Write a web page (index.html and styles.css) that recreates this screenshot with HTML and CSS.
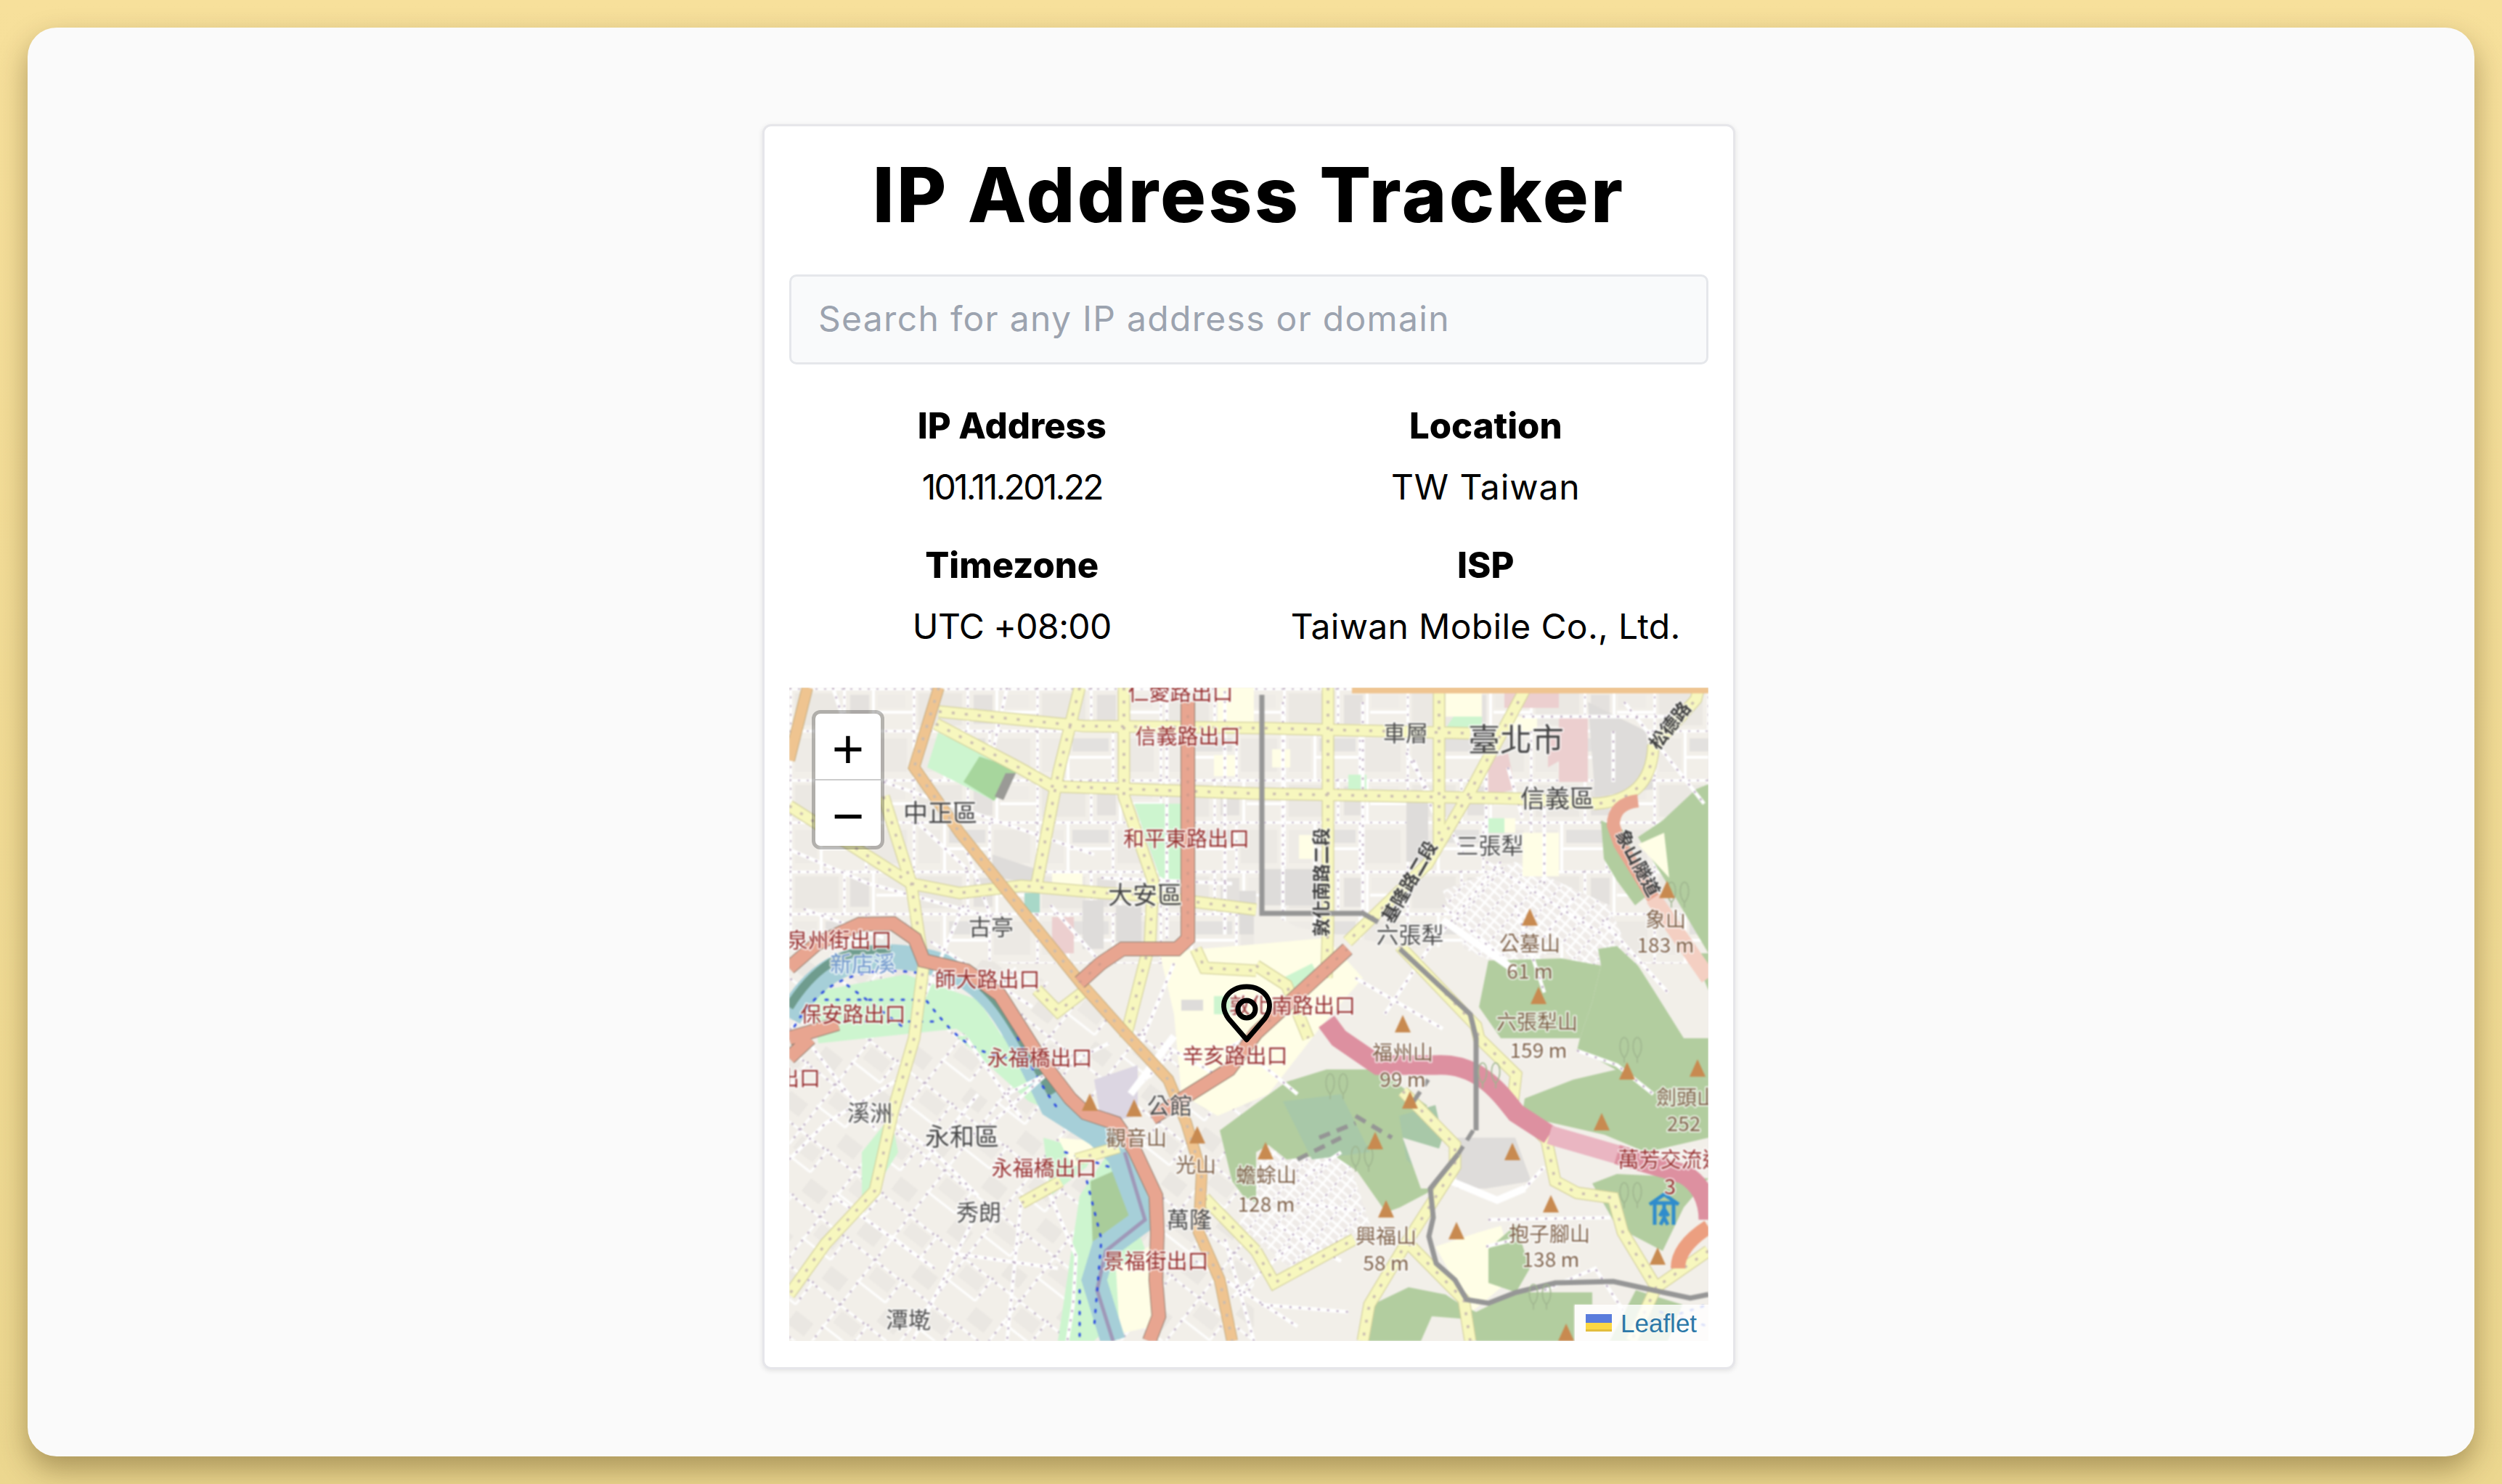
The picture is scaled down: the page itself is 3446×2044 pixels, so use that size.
FILE: index.html
```html
<!DOCTYPE html>
<html lang="en">
<head>
<meta charset="utf-8">
<title>IP Address Tracker</title>
<link rel="stylesheet" href="styles.css">
</head>
<body>
<main class="panel">
<section class="card">
<h1 class="title">IP Address Tracker</h1>
<input class="search" type="text" placeholder="Search for any IP address or domain">
<dl class="facts">
<div class="fact"><dt>IP Address</dt><dd class="ip">101.11.201.22</dd></div>
<div class="fact"><dt>Location</dt><dd class="loose">TW Taiwan</dd></div>
<div class="fact"><dt>Timezone</dt><dd class="utc">UTC +08:00</dd></div>
<div class="fact"><dt>ISP</dt><dd>Taiwan Mobile Co., Ltd.</dd></div>
</dl>
<div class="map">
<svg class="tiles" viewBox="0 0 1266 900" width="1266" height="900" xmlns="http://www.w3.org/2000/svg">
<defs>
<pattern id="city" width="170" height="126" patternUnits="userSpaceOnUse">
<rect width="170" height="126" fill="#f2efe9"/>
<rect x="8" y="8" width="60" height="44" fill="#ebe8e3"/>
<rect x="84" y="10" width="26" height="40" fill="#e4e1de"/>
<rect x="122" y="10" width="38" height="18" fill="#efece7"/>
<rect x="8" y="70" width="30" height="46" fill="#eeebe6"/>
<rect x="50" y="70" width="50" height="18" fill="#e3e1df"/>
<rect x="112" y="70" width="50" height="46" fill="#ece9e4"/>
<path d="M0 2H170M0 60H170M2 0V126M76 0V60M44 60V126M106 60V126M116 0V60M120 34H170M44 96H106" stroke="#fff" stroke-width="4" fill="none"/>
<path d="M0 2H170M0 60H170M76 0V60M106 60V126M2 0V126" stroke="#c4b6c8" stroke-width="2" stroke-dasharray="3 9" fill="none"/>
</pattern>
<pattern id="suburb" width="96" height="78" patternUnits="userSpaceOnUse" patternTransform="rotate(38)">
<rect width="96" height="78" fill="#f2efe9"/>
<rect x="10" y="8" width="34" height="20" fill="#ece9e4"/>
<rect x="56" y="46" width="30" height="22" fill="#eae7e2"/>
<path d="M0 3H96M3 0V78M50 0V40M0 40H50" stroke="#fff" stroke-width="3" fill="none"/>
<path d="M0 3H96M3 0V78M50 0V40" stroke="#b9a8bf" stroke-width="2.5" stroke-dasharray="3 11" fill="none"/>
</pattern>
<pattern id="dense" width="26" height="20" patternUnits="userSpaceOnUse" patternTransform="rotate(40)">
<rect width="26" height="20" fill="#efebe8"/>
<path d="M0 2H26M2 0V20M14 0V20M0 11H26" stroke="#fff" stroke-width="3" fill="none"/>
<path d="M2 0V20" stroke="#c4b6c8" stroke-width="2" stroke-dasharray="2 7" fill="none"/>
</pattern>
<g id="minor">
<path d="M130 130L420 230M0 223L109 270L278 316M240 300L180 440M278 316L235 200M430 262L610 270"/>
<path d="M60 0L100 120M300 0L280 90M245 250L170 180M20 305L130 345M195 350L335 440M360 300L430 380"/>
<path d="M530 380L480 500M520 5V345M600 5V340M680 20V320M790 20V340M850 90L930 230M960 60V220M960 240L1120 340M1040 150V270M1120 320L1210 420"/>
<path d="M980 240L880 360L820 450M900 300L990 380M1000 300L1040 420M1080 290L1020 370M1135 60V130M1010 40H1210M1150 20L1260 160"/>
<path d="M780 400L900 470M990 110L1010 180M860 100L890 180"/>
<path d="M244 483L320 593M256 620L380 510M0 650L50 600L150 540M100 570L200 640L260 700M358 696L395 783L391 850L383 900"/>
<path d="M20 480L120 610M60 700L200 800M180 660L260 560M260 720L170 900M300 560L440 490M230 780L370 800M320 700L300 900"/>
<path d="M512 490L600 540M600 500L700 440M640 510L700 560M470 560L530 500M600 760L640 900M560 790L700 880"/>
<path d="M912 680L975 706L1013 690L1040 660M963 733L1131 730M960 770L1000 760M1085 500L1140 520L1190 560M1040 830L1110 800L1150 860"/>
<path d="M700 680L760 640M700 710L780 720M670 740L760 790M690 770L610 840M650 850L770 860"/>
</g>
<g id="yl">
<path d="M206 33L404 53L660 56L938 63"/>
<path d="M202 50L316 110L362 136L643 146L1005 153L1110 160Q1186 155 1190 83L1249 16L1253 0"/>
<path d="M400 0L371 116L341 270"/>
<path d="M461 0V150L501 266L497 350L463 483"/>
<path d="M0 163L168 270L185 383L172 483L143 583L118 693L50 766L0 836"/>
<path d="M130 150L168 270L235 283L320 273L433 283L488 286L643 306"/>
<path d="M742 0V330L740 400"/>
<path d="M895 0V216"/>
<path d="M1013 3L938 143L879 243L769 350"/>
<path d="M643 383L685 410L715 483"/>
<path d="M560 360L572 386L643 390"/>
<path d="M341 416L370 446L404 420"/>
<path d="M841 356L946 466L950 483L1001 533L996 576L1043 623L1055 680L1085 696L1135 703L1148 750L1194 826"/>
<path d="M1266 776L1194 826M1194 826L1160 900"/>
<path d="M845 556L917 630L917 660L853 760L799 850L790 900M853 766L929 843L938 900M643 776L668 820L778 760"/>
<path d="M572 703L643 776M320 710L374 680M395 650L454 633"/>
</g>
<g id="tree"><path d="M0 0C-9 -10 -6 -28 0 -28C6 -28 9 -10 0 0V7M18 0C9 -10 12 -28 18 -28C24 -28 27 -10 18 0V7" fill="none" stroke="#9fb58f" stroke-width="1.6"/></g>
</defs>

<rect class="land" width="1266" height="900"/>
<rect fill="url(#city)" width="1266" height="380"/>
<polygon class="grey" points="404,293 433,293 433,360 404,360"/>
<polygon class="grey" points="450,300 485,300 485,350 450,350"/>
<polygon class="grey" points="620,280 643,280 643,340 620,340"/>
<polygon class="grey" points="280,230 340,250 335,270 280,260"/>
<polygon class="grey" points="650,250 730,250 730,300 650,300"/>
<polygon class="grey" points="850,150 880,150 880,240 850,240"/>
<polygon class="resid" points="904,6 954,6 954,40 904,40"/>
<polygon class="park" points="915,40 954,40 954,56 904,56"/>
<polygon class="pinkblock" points="985,8 1060,8 1060,28 985,28"/>
<polygon class="resid" points="1118,90 1165,90 1165,120 1118,120"/>
<polygon class="park" points="963,180 985,180 985,200 963,200"/>
<polygon class="resid" points="985,180 1000,180 1000,200 985,200"/>
<polygon class="resid" points="585,93 614,93 614,122 585,122"/>
<polygon class="resid" points="362,256 404,256 404,273 362,273"/>
<polygon class="teal" points="324,283 345,283 345,310 324,310"/>
<polygon class="pinkblock" points="362,316 392,316 392,366 362,366"/>
<polygon class="resid" points="702,203 723,203 723,236 702,236"/>
<polygon class="resid" points="665,85 690,85 690,110 665,110"/>
<polygon class="park" points="770,120 795,120 795,145 770,145"/>
<polygon fill="url(#suburb)" points="0,340 300,380 500,470 640,560 640,900 0,900"/>
<polygon fill="#f2efe9" points="640,300 700,330 860,360 990,350 1060,420 1266,470 1266,900 640,900"/>
<polygon fill="url(#dense)" points="900,280 1000,240 1060,340 1020,400 930,360"/>
<polygon fill="url(#dense)" points="1000,240 1130,300 1170,400 1090,400 1040,310"/>
<polygon fill="url(#dense)" points="650,640 760,620 800,740 690,800 620,740"/>

<polygon class="resid" points="510,365 740,345 790,400 730,470 660,560 590,590 540,560 530,450"/>
<polygon class="park" points="585,425 610,425 610,450 585,450"/>
<polygon class="grey" points="540,430 570,430 570,445 540,445"/>
<polygon class="park" points="680,400 720,380 730,400 700,430"/>
<polygon class="resid" points="590,0 640,0 640,60 590,60"/>
<polygon class="resid" points="985,40 1030,40 1030,60 985,60"/>
<polygon class="resid" points="1010,200 1060,200 1060,260 1010,260"/>
<polygon class="resid" points="890,770 980,740 1000,810 940,860"/>
<polygon class="grey" points="1100,20 1180,60 1190,140 1110,150"/>
<polygon class="pinkblock" points="1045,60 1080,60 1080,90 1045,110"/>
<polygon class="pinkblock" points="960,100 990,90 1000,140 960,150"/>
<polygon class="pinkblock" points="1060,40 1100,40 1100,130 1060,130"/>

<g class="forest">
<polygon points="1249,140 1203,183 1169,206 1211,273 1266,366 1266,133"/>
<polygon points="1118,183 1148,196 1186,283 1165,300 1140,266 1122,236"/>
<polygon points="1114,360 1140,356 1169,383 1190,416 1232,483 1266,483 1266,540 1190,535 1145,530 1100,505 1085,500 1089,483 1106,433 1118,383"/>
<polygon points="963,376 1064,373 1118,383 1106,433 1089,483 980,483 950,440"/>
<polygon points="1245,366 1266,366 1266,417"/>
<polygon points="1140,526 1266,540 1266,620 1180,640 1123,616 1009,590 1013,566 1080,540"/>
<polygon points="740,526 811,526 879,576 845,623 912,640 879,696 841,716 822,723 782,666 748,643 685,650 660,630 643,640 593,610 643,573 685,543"/>
<polygon points="593,610 643,590 643,710 625,700 610,680"/>
<polygon points="1140,670 1266,676 1232,716 1203,776 1140,743 1106,683"/>
<polygon points="803,850 853,826 904,836 925,850 946,860 1001,833 1106,833 1106,850 1081,850 1081,900 946,900 935,870 885,866 870,900 790,900"/>
<polygon points="963,773 1001,740 1020,800 1001,833 963,820"/>
<polygon points="1166,830 1230,850 1210,900 1130,900"/>
</g>
<polygon class="resid" points="1169,216 1205,200 1212,262"/>
<polygon class="forest2" points="680,570 760,560 800,640 720,650"/>
<polygon class="forest2" points="840,590 890,575 900,620 880,680 850,650"/>
<polygon class="grey" points="917,620 1000,620 1022,680 960,690 920,700"/>
<polygon class="grey" points="900,710 950,700 975,730 930,750"/>
<polygon class="pale" points="845,620 912,640 910,690 870,690"/>
<polygon class="pale" points="895,690 960,690 985,740 950,750 895,750"/>
<polygon class="park" points="205,62 316,113 282,156 190,110"/>
<polygon class="parkdark" points="262,95 316,113 282,156 240,130"/>
<polygon class="greydark" points="298,118 312,118 295,155 283,150"/>
<polygon class="park" points="475,160 550,160 550,280 510,260"/>
<polygon class="park" points="350,620 420,640 410,660 360,700"/>
<polygon class="resid" points="370,620 425,625 430,650 390,660"/>
<polygon class="park" points="100,640 140,590 150,640 100,720"/>
<polygon class="park" points="400,700 440,640 500,800 460,860 420,900 370,900"/>
<polygon class="forest-lo" points="415,680 460,660 480,760 440,780 420,830"/>
<polygon class="resid" points="450,800 510,760 500,880 455,890"/>
<polygon class="park" points="30,420 160,395 260,430 300,490 320,530 230,470 40,490"/>
<polygon class="park" points="230,480 300,480 360,540 400,600 330,570"/>
<polygon class="lilac" points="420,540 480,520 480,590 430,600"/>

<path class="river" d="M0 455C40 380 100 360 180 375C280 395 300 450 362 576L425 616L454 643L488 733L433 773L420 816L446 900"/>
<path class="riverdark" d="M235 390C290 420 310 470 362 560"/>
<path class="riverdark" d="M0 440C40 375 90 355 140 362"/>
<path class="rivermauve" d="M462 640L490 733L436 776L424 830L446 900"/>
<path class="dots-blue" d="M0 480C40 400 100 380 190 395M300 440C310 480 340 540 370 580M410 680L430 760L420 880M60 460H200M180 420C220 470 240 500 300 510M50 430H180M80 410L160 470M1170 880L1266 850M1200 860L1266 880M400 830L400 900M380 640L440 660"/>

<use href="#minor" class="r-white"/>
<use href="#minor" class="r-dots"/>

<path class="r-whitewide" d="M912 680L975 706L1013 690M900 320L1000 390M470 560L530 480"/>

<use href="#yl" class="r-ycase"/>
<use href="#yl" class="r-yellow"/>
<use href="#yl" class="r-dotsy"/>

<path class="r-tancase" d="M206 0L172 110L235 200L328 316L404 410L463 476L522 540L547 600L568 670L564 750L593 816L610 900M25 0L0 100"/>
<path class="r-tan" d="M206 0L172 110L235 200L328 316L404 410L463 476L522 540L547 600L568 670L564 750L593 816L610 900M25 0L0 100"/>
<path class="r-dotsy" d="M206 0L172 110L235 200L328 316L404 410L463 476L522 540L547 600L568 670L564 750L593 816L610 900"/>
<path class="r-tantop" d="M1266 3H775" />

<path class="r-redcase" d="M549 20V346L534 360H459L429 380L400 406M769 360L643 476L606 526L547 563L500 593M0 386L38 353L97 326L143 325L173 346L185 376L244 390L290 423L349 516L387 566L408 586L450 600L475 636L505 700L507 750L505 816L509 866L496 900M0 510L29 483M0 483L67 463"/>
<path class="r-red" d="M549 20V346L534 360H459L429 380L400 406M769 360L643 476L606 526L547 563L500 593M0 386L38 353L97 326L143 325L173 346L185 376L244 390L290 423L349 516L387 566L408 586L450 600L475 636L505 700L507 750L505 816L509 866L496 900M0 510L29 483M0 483L67 463"/>
<path class="r-dotsr" d="M549 20V346M429 380L400 406M769 360L643 476"/>
<path class="r-red" d="M1169 156Q1135 160 1135 190L1144 215L1190 290"/>
<path class="r-redlight" d="M1190 290L1266 400"/>
<path class="r-pink" d="M740 460L757 483L811 520H890C950 516 980 560 1001 586L1047 616"/>
<path class="r-pinklight" d="M1047 616L1140 643"/>
<path class="r-pink" d="M1140 643L1232 670Q1266 690 1266 733"/>
<path class="r-orange" d="M1266 743Q1224 770 1224 800"/>

<path class="r-gray" d="M651 10V311H790L811 323M841 360L938 450L946 483V610M921 643L883 690L887 730L881 756L891 793L917 816L933 843L963 848L1001 833L1055 820L1135 818L1190 830L1241 841L1266 836"/>
<path class="r-graydash" d="M942 610L921 643M780 590L830 620M730 620L780 600M700 650L760 620M860 570L880 540"/>

<g>
<use href="#tree" x="745" y="560"/><use href="#tree" x="955" y="545"/><use href="#tree" x="1150" y="510"/>
<use href="#tree" x="1150" y="710"/><use href="#tree" x="1215" y="296"/><use href="#tree" x="780" y="660"/><use href="#tree" x="1025" y="850"/>
</g>

<g class="peaks">
<path d="M1020 304l-11 24h22zM1032 412l-11 24h22zM1209 266l-11 24h22zM845 451l-11 24h22zM855 556l-11 24h22zM807 612l-11 24h22zM656 626l-11 24h22zM822 706l-11 24h22zM919 736l-11 24h22zM996 627l-11 24h22zM1049 699l-11 24h22zM1119 586l-11 24h22zM1154 516l-11 24h22zM1251 512l-11 24h22zM1196 771l-11 24h22zM1070 876l-11 24h22zM414 559l-11 24h22zM475 567l-11 24h22zM562 604l-11 24h22z"/>
</g>

<g class="shelter">
<path d="M1185 712L1205 698L1225 712M1192 712V740M1218 712V740M1188 710H1222" fill="none"/>
<path d="M1205 712v6M1205 718l-6 10M1205 718l6 10M1205 722v8M1205 730l-5 10M1205 730l5 10" fill="none" stroke-width="3"/>
</g>
<g class="lb-blue"><text x="101" y="391">新店溪</text></g>

<g class="lb-road">
<text transform="translate(1220 58) rotate(-52)">松德路</text>
<text transform="translate(1161 246) rotate(62)">象山隧道</text>
<text transform="translate(862 272) rotate(-60)">基隆路二段</text>
<text transform="translate(742 268) rotate(-90)">敦化南路二段</text>
</g>

<g class="lb-area">
<text x="208" y="185">中正區</text>
<text x="490" y="298">大安區</text>
<text x="1058" y="165">信義區</text>
<text class="lb-city" x="1001" y="88">臺北市</text>
<text x="238" y="631">永和區</text>
</g>
<g class="lb-sub">
<text x="278" y="341">古亭</text>
<text x="849" y="74">車層</text>
<text x="965" y="229">三張犁</text>
<text x="855" y="352">六張犁</text>
<text x="111" y="597">溪洲</text>
<text x="261" y="734">秀朗</text>
<text x="164" y="882">潭墘</text>
<text x="524" y="587">公館</text>
<text x="551" y="744">萬隆</text>
</g>
<g class="lb-peak">
<text x="1020" y="363">公墓山</text><text x="1020" y="401">61 m</text>
<text x="1207" y="330">象山</text><text x="1207" y="365">183 m</text>
<text x="1030" y="471">六張犁山</text><text x="1032" y="510">159 m</text>
<text x="845" y="513">福州山</text><text x="845" y="550">99 m</text>
<text x="1236" y="575">劍頭山</text><text x="1232" y="611">252</text>
<text x="657" y="682">蟾蜍山</text><text x="657" y="722">128 m</text>
<text x="822" y="766">興福山</text><text x="822" y="803">58 m</text>
<text x="1047" y="763">抱子腳山</text><text x="1049" y="798">138 m</text>
<text x="560" y="668">光山</text>
<text x="478" y="631">觀音山</text>
</g>
<g class="lb-exit">
<text x="539" y="18">仁愛路出口</text>
<text x="549" y="78">信義路出口</text>
<text x="547" y="219">和平東路出口</text>
<text x="69" y="359">泉州街出口</text>
<text x="273" y="413">師大路出口</text>
<text x="88" y="461">保安路出口</text>
<text x="345" y="521">永福橋出口</text>
<text x="351" y="673">永福橋出口</text>
<text x="14" y="549">出口</text>
<text x="614" y="518">辛亥路出口</text>
<text x="693" y="449">敦化南路出口</text>
<text x="505" y="801">景福街出口</text>
<text x="1214" y="661">萬芳交流道</text>
<text x="1213" y="698">3</text>
</g>
</svg>

<svg class="pin" viewBox="0 0 80 90" width="80" height="90" xmlns="http://www.w3.org/2000/svg">
<path d="M40 81L15 52C-1 30 15 8 40 8C65 8 81 30 65 52Z" fill="none" stroke="#000" stroke-width="7" stroke-linejoin="round"/>
<circle cx="40" cy="39" r="12" fill="none" stroke="#000" stroke-width="7"/>
</svg>

<div class="zoom">
<a class="zoom-btn zoom-in">+</a>
<a class="zoom-btn">&#8722;</a>
</div>
<div class="credit">
<svg class="flag" viewBox="0 0 36 24" width="36" height="24" xmlns="http://www.w3.org/2000/svg"><rect width="36" height="12" fill="#5a7cdc"/><rect y="12" width="36" height="9" fill="#fbd743"/><rect y="21" width="36" height="3" fill="#e3bd3c"/></svg>
<span>Leaflet</span>
</div>
</div>
</section>
</main>
</body>
</html>
```
FILE: styles.css
```css
* { box-sizing: border-box; }
html, body { margin: 0; height: 100%; }
body {
  padding: 38px 38px 38px;
  overflow: hidden;
  background: linear-gradient(180deg, #f7e09b 0%, #ecd78f 100%);
  font-family: Inter, "Liberation Sans", sans-serif;
  color: #000;
}
.panel {
  height: 100%;
  display: flex;
  justify-content: center;
  align-items: flex-start;
  padding: 133px 6px 0 0;
  border-radius: 40px;
  background: #fafafa;
  box-shadow: 0 18px 40px rgba(60, 40, 0, .38);
}
.card {
  width: 1340px;
  padding: 29px 34px 36px;
  background: #fff;
  border: 3px solid #e6e6ea;
  border-radius: 12px;
  box-shadow: 0 2px 7px rgba(0, 0, 0, .1);
}
.title {
  margin: 0 0 45px;
  font-size: 105px;
  line-height: 130px;
  font-weight: 800;
  text-align: center;
  letter-spacing: 3.2px;
}
.search {
  display: block;
  width: 100%;
  height: 124px;
  padding: 0 37px 3px;
  font: 400 48px Inter, "Liberation Sans", sans-serif;
  letter-spacing: 1.3px;
  background: #f9fafb;
  border: 3px solid #e5e7eb;
  border-radius: 10px;
  outline: none;
}
.search::placeholder { color: #9ca3af; opacity: 1; }
.facts {
  display: grid;
  grid-template-columns: 1fr 1fr;
  gap: 24px 39px;
  margin: 43px 0 42px;
}
.fact { text-align: center; }
.fact dt { font-size: 49px; line-height: 84px; font-weight: 800; }
.fact dd { margin: 0; font-size: 48px; line-height: 84px; font-weight: 400; letter-spacing: .3px; }
.fact .ip { letter-spacing: -2.7px; }
.fact .loose { letter-spacing: .9px; }
.fact .utc { letter-spacing: -.6px; }
.map {
  position: relative;
  height: 900px;
  overflow: hidden;
  background: #f2efe9;
}
.tiles { display: block; filter: blur(1.2px); }
.land { fill: #f2efe9; }
.resid { fill: #fffee6; }
.grey { fill: #dedcda; }
.greydark { fill: #9a9a96; }
.teal { fill: #a8d8c8; }
.pale { fill: #f2efe9; }
.pinkblock { fill: #eccfcf; }
.forest polygon { fill: #b2cd9f; }
.forest-lo { fill: #a9cc9a; }
.forest2 { fill: #a8c8a8; }
.park { fill: #cdf5cf; }
.parkdark { fill: #a7d69d; }
.lilac { fill: #dcd6e2; }
.river { fill: none; stroke: #a6cfd8; stroke-width: 34; }
.riverdark { fill: none; stroke: #6f9c8e; stroke-width: 12; }
.rivermauve { fill: none; stroke: #9f98b8; stroke-width: 5; }
.dots-blue { fill: none; stroke: #2a4ae0; stroke-width: 3; stroke-dasharray: 3 12; stroke-linecap: round; }
.r-white, .r-dots, .r-whitewide, .r-ycase, .r-yellow, .r-dotsy, .r-tan, .r-tantop, .r-tancase, .r-red, .r-redcase, .r-dotsr, .r-redlight, .r-pink, .r-pinklight, .r-orange, .r-gray, .r-graydash { fill: none; }
.r-white { stroke: #fff; stroke-width: 5; }
.r-dots { stroke: #bba9c0; stroke-width: 2.5; stroke-dasharray: 3 10; }
.r-whitewide { stroke: #fff; stroke-width: 10; }
.r-ycase { stroke: #d3d09c; stroke-width: 17; }
.r-yellow { stroke: #f7f7be; stroke-width: 14.5; }
.r-dotsy { stroke: #c8bbb0; stroke-width: 3.5; stroke-dasharray: 4 14; }
.r-tancase { stroke: #c0a87c; stroke-width: 16; }
.r-tan { stroke: #efc490; stroke-width: 14; }
.r-tantop { stroke: #efc490; stroke-width: 10; }
.r-redcase { stroke: #8a7a6c; stroke-width: 20; }
.r-red { stroke: #e8a590; stroke-width: 18; }
.r-dotsr { stroke: #cf9a8a; stroke-width: 3; stroke-dasharray: 4 14; }
.r-redlight { stroke: #f4cfc2; stroke-width: 22; }
.r-pink { stroke: #dd90a0; stroke-width: 27; }
.r-pinklight { stroke: #eab6c2; stroke-width: 26; }
.r-orange { stroke: #ec9f80; stroke-width: 20; }
.r-gray { stroke: #969696; stroke-width: 7; }
.r-graydash { stroke: #959595; stroke-width: 6; stroke-dasharray: 16 10; }
.peaks path { fill: #c88a50; }
.shelter path { stroke: #2f8ccc; stroke-width: 5; }
.tiles text {
  font-family: "Noto Sans CJK TC", "Noto Sans", sans-serif;
  text-anchor: middle;
  paint-order: stroke;
  stroke: rgba(255, 255, 255, .7);
  stroke-width: 4px;
  stroke-linejoin: round;
}
.lb-area text { font-size: 34px; fill: #444; }
.lb-area .lb-city { font-size: 44px; }
.lb-sub text { font-size: 31px; fill: #4c4c4c; }
.lb-peak text { font-size: 28px; fill: #7d6048; }
.lb-exit text { font-size: 29px; fill: #962f2f; }
.lb-blue text { font-size: 30px; fill: #6f96cc; }
.lb-road text { font-size: 25px; fill: #404040; font-weight: 700; stroke-width: 3px; }
.pin { position: absolute; left: 590px; top: 404px; }
.zoom {
  position: absolute;
  left: 31px;
  top: 31px;
  width: 100px;
  border: 5px solid rgba(0, 0, 0, .25);
  border-radius: 12px;
  background: #fff;
  background-clip: padding-box;
  overflow: hidden;
}
.zoom-btn {
  display: flex;
  align-items: center;
  justify-content: center;
  height: 90px;
  padding-top: 8px;
  font: 400 76px/1 "Liberation Sans", sans-serif;
  color: #000;
}
.zoom-in { height: 92px; border-bottom: 2px solid #ccc; }
.credit {
  position: absolute;
  right: 0;
  bottom: 0;
  width: 184px;
  height: 50px;
  display: flex;
  align-items: center;
  gap: 12px;
  padding-left: 15px;
  background: rgba(255, 255, 255, .82);
  font: 35px/1 "Liberation Sans", sans-serif;
  color: #2c78a8;
}
.flag { display: block; }
```
